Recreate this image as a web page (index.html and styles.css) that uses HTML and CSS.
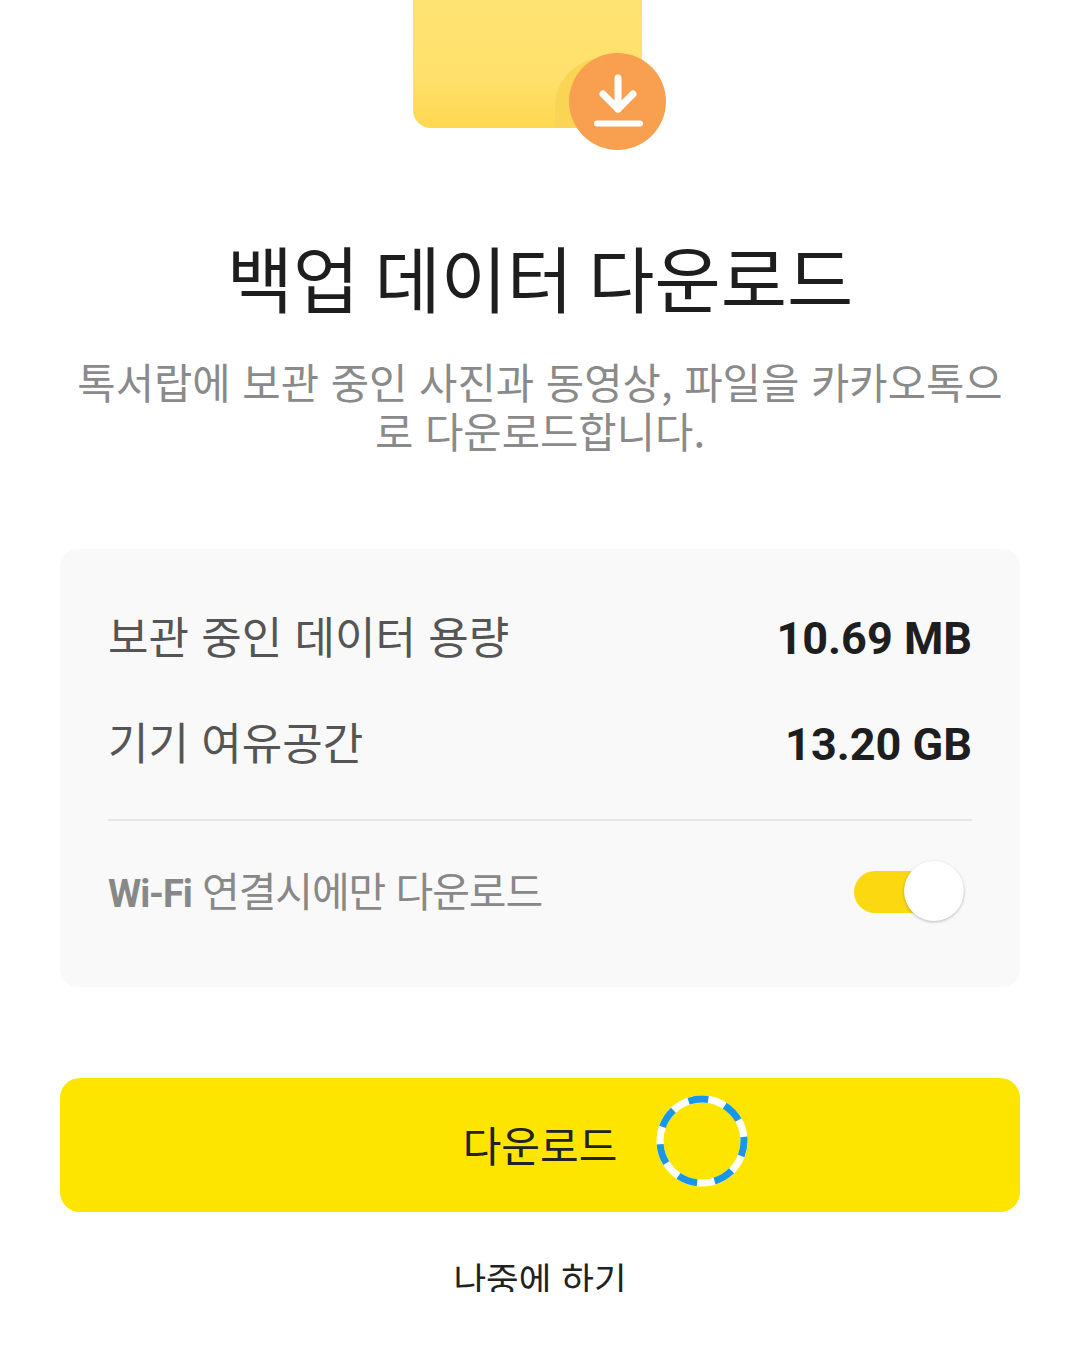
FILE: index.html
```html
<!DOCTYPE html>
<html lang="ko">
<head>
    <meta charset="UTF-8">
    <meta name="viewport" content="width=device-width, initial-scale=1.0">
    <title>백업 데이터 다운로드</title>
    <link rel="stylesheet" href="styles.css">
</head>
<body>

    <div class="hero">
        <div class="folder">
            <div class="folder-shade"></div>
            <div class="badge">
                <svg viewBox="0 0 98 98" width="98" height="98" fill="none" stroke="#fff" stroke-linecap="round" stroke-linejoin="round">
                    <path d="M49 25V56" stroke-width="7"/>
                    <path d="M34 41L49 56L64 41" stroke-width="7"/>
                    <path d="M28 70.5H71" stroke-width="6"/>
                </svg>
            </div>
        </div>
    </div>

    <h1 class="title">백업 데이터 다운로드</h1>
    <p class="desc">톡서랍에 보관 중인 사진과 동영상, 파일을 카카오톡으로 다운로드합니다.</p>

    <div class="card">
        <div class="info-row">
            <span class="info-label">보관 중인 데이터 용량</span>
            <span class="info-value">10.69 MB</span>
        </div>
        <div class="info-row">
            <span class="info-label">기기 여유공간</span>
            <span class="info-value">13.20 GB</span>
        </div>
        <div class="wifi-row">
            <span class="wifi-label"><b>Wi-Fi</b> 연결시에만 다운로드</span>
            <div class="toggle"><div class="toggle-knob"></div></div>
        </div>
    </div>

    <button class="download-btn" type="button">
        다운로드
        <svg class="spinner" viewBox="0 0 92 92" width="92" height="92" fill="none" stroke-width="7">
            <circle cx="46" cy="46" r="42" stroke="#fff"/>
            <circle cx="46" cy="46" r="42" stroke="#1a96e6" stroke-dasharray="20 17.7" stroke-dashoffset="4.6"/>
        </svg>
    </button>

    <div class="later">나중에 하기</div>

</body>
</html>
```

FILE: styles.css
```css
body {
    margin: 0;
    height: 1351px;
    overflow: hidden;
    background-color: #fff;
    font-family: "Noto Sans CJK KR", "Noto Sans", sans-serif;
}
.hero {
    display: flex;
    justify-content: center;
    padding-right: 25px;
}
.folder {
    position: relative;
    width: 229px;
    height: 128px;
    border-radius: 0 0 18px 18px;
    background: linear-gradient(#ffe372, #ffe06c 60%, #ffd850);
}
.folder-shade {
    position: absolute;
    left: 142px;
    top: 58px;
    width: 60px;
    height: 70px;
    border-radius: 49px 0 0 0;
    background-color: #fad454;
}
.badge {
    position: absolute;
    left: 156px;
    top: 53px;
    width: 97px;
    height: 97px;
    border-radius: 50%;
    background-color: #f9a050;
}
.badge svg {
    display: block;
}
.title {
    margin: 99px 0 0;
    text-align: center;
    font-size: 72px;
    line-height: 98px;
    font-weight: 400;
    word-spacing: -5px;
    color: #1e1e1e;
}
.desc {
    margin: 32px 60px 0;
    padding: 0 10px;
    text-align: center;
    font-size: 41.7px;
    line-height: 49px;
    font-weight: 400;
    color: #8a8a8a;
    word-break: break-all;
}
.card {
    margin: 94px 60px 0;
    height: 438px;
    box-sizing: border-box;
    padding: 36px 48px 0;
    border-radius: 18px;
    background-color: #f9f9f9;
}
.info-row {
    display: flex;
    justify-content: space-between;
    align-items: center;
    height: 106px;
}
.info-label {
    margin-bottom: 6px;
    font-size: 44px;
    color: #555;
}
.info-value {
    font-family: Roboto, sans-serif;
    font-size: 45px;
    font-weight: 700;
    color: #1e1e1e;
}
.wifi-row {
    display: flex;
    justify-content: space-between;
    align-items: center;
    height: 142px;
    margin-top: 22px;
    border-top: 2px solid #e6e6e6;
}
.wifi-label {
    margin-bottom: 6px;
    font-size: 41px;
    letter-spacing: -1.1px;
    color: #888;
}
.wifi-label b {
    font-family: Roboto, sans-serif;
    font-size: 38px;
    font-weight: 700;
}
.toggle {
    position: relative;
    width: 110px;
    height: 42px;
    margin-right: 8px;
    border-radius: 21px;
    background-color: #fbd80f;
}
.toggle-knob {
    position: absolute;
    right: 0;
    top: -10px;
    width: 60px;
    height: 60px;
    border-radius: 50%;
    background-color: #fff;
    box-shadow: 0 1px 3px rgba(0, 0, 0, 0.25);
}
.download-btn {
    position: relative;
    display: block;
    width: 960px;
    height: 134px;
    margin: 91px 60px 0;
    padding: 0 0 3px;
    border: none;
    border-radius: 20px;
    background-color: #fee500;
    font-family: inherit;
    font-size: 42px;
    color: #222;
}
.spinner {
    position: absolute;
    left: 596px;
    top: 17px;
}
.later {
    margin-top: 43px;
    height: 37px;
    overflow: hidden;
    text-align: center;
    font-size: 35.5px;
    line-height: 46px;
    color: #222;
}
```
